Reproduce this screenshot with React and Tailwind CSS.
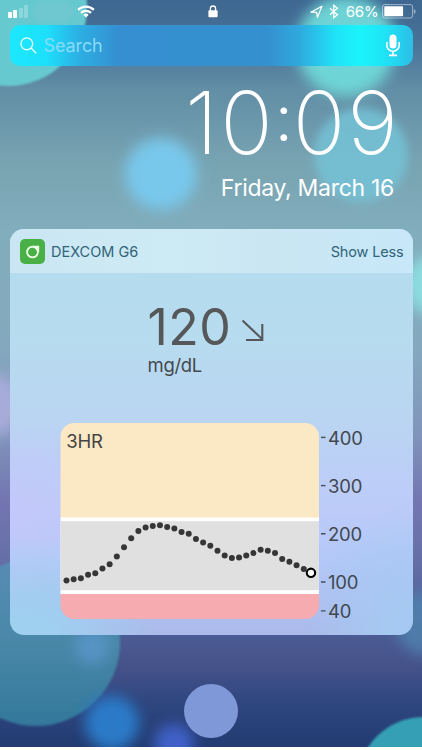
import { useId } from 'react';

// One reading every five minutes, oldest first (mg/dL)
const readings = [
    104, 107, 109, 116, 119, 129, 138, 154, 173, 192, 207, 214, 217, 219, 215, 212, 205, 201,
    190, 183, 176, 166, 156, 151, 152, 156, 161, 168, 166, 161, 149, 143, 136, 128, 120,
];

const ticks = [400, 300, 200, 100, 40];

const toX = (index) => 6.5 + index * 7.19;
const toY = (value) => 159.5 - (value - 100) * 0.482;

/**
 * Wallpaper - blurred bokeh circles over the gradient
 */
const Wallpaper = () => {
    const id = useId();
    const soft = `${id}-soft`;
    const blur = `${id}-blur`;
    const edge = `${id}-edge`;

    return (
        <svg className="absolute inset-0" width="422" height="747" viewBox="0 0 422 747">
            <defs>
                <filter id={edge}><feGaussianBlur stdDeviation="1" /></filter>
                <filter id={soft} x="-30%" y="-30%" width="160%" height="160%"><feGaussianBlur stdDeviation="4" /></filter>
                <filter id={blur} x="-50%" y="-50%" width="200%" height="200%"><feGaussianBlur stdDeviation="7" /></filter>
                <linearGradient id={`${id}-teal`} x1="0" y1="0" x2="0" y2="1">
                    <stop offset="0" stopColor="#578cb5" />
                    <stop offset="0.5" stopColor="#4a88a8" />
                    <stop offset="1" stopColor="#33789b" />
                </linearGradient>
            </defs>
            <circle cx="8" cy="7" r="79" fill="#66c9d0" filter={`url(#${edge})`} />
            <circle cx="346" cy="46" r="50" fill="#6fd9d8" opacity="0.95" filter={`url(#${blur})`} />
            <circle cx="361" cy="155" r="47" fill="#74c2d6" opacity="0.85" filter={`url(#${soft})`} />
            <circle cx="161" cy="174" r="36" fill="#78c8ec" filter={`url(#${blur})`} />
            <circle cx="434" cy="285" r="30" fill="#8bdcdf" filter={`url(#${blur})`} />
            <circle cx="-10" cy="405" r="32" fill="#a7abd9" filter={`url(#${blur})`} />
            <circle cx="36" cy="642" r="84" fill={`url(#${id}-teal)`} filter={`url(#${edge})`} />
            <circle cx="92" cy="647" r="17" fill="#5895c8" opacity="0.9" filter={`url(#${blur})`} />
            <circle cx="112" cy="723" r="27" fill="#297ac8" filter={`url(#${blur})`} />
            <circle cx="174" cy="744" r="20" fill="#4060c8" filter={`url(#${blur})`} />
            <circle cx="427" cy="623" r="32" fill="#4f80ac" opacity="0.9" filter={`url(#${blur})`} />
            <circle cx="424" cy="784" r="67" fill="#35a0b5" filter={`url(#${edge})`} />
        </svg>
    );
};

const StatusBar = () => (
    <div className="grid h-[25px] grid-cols-[1fr_auto_1fr] items-start pt-1 pl-[7.5px] pr-[6.5px]">
        <div className="flex items-start">
            <div className="flex h-[14px] items-end gap-[1.6px]">
                <span className="h-[6px] w-[4px] rounded-[1px] bg-white" />
                <span className="h-[8px] w-[4px] rounded-[1px] bg-white" />
                <span className="h-[10.5px] w-[4px] rounded-[1px] bg-white/25" />
                <span className="h-[13px] w-[4px] rounded-[1px] bg-white/25" />
            </div>
            <span className="ml-[5px] -mt-[2px] h-[20px] w-[41px] rounded-full bg-[#74c8cf]/70 blur-[2px]" />
            <svg className="ml-[3px] mt-[1px]" width="18" height="13" viewBox="0 0 19 13" fill="none" stroke="white" strokeWidth="2.4">
                <path d="M1.2 4.8a11.9 11.9 0 0 1 16.6 0" />
                <path d="M4.2 7.9a7.6 7.6 0 0 1 10.6 0" />
                <path d="M9.5 12.8 6.7 10a4.1 4.1 0 0 1 5.6 0z" fill="white" stroke="none" />
            </svg>
        </div>
        <svg className="mt-[1px] ml-[2px]" width="10" height="13" viewBox="0 0 10 13">
            <path d="M2.4 6V3.6a2.6 2.6 0 0 1 5.2 0V6" fill="none" stroke="white" strokeWidth="1.3" />
            <rect x="0.4" y="5.3" width="9.2" height="7" rx="1" fill="white" />
        </svg>
        <div className="flex items-start justify-end">
            <svg className="mt-px mr-[6px]" width="13" height="13" viewBox="0 0 13 13" fill="none" stroke="white" strokeWidth="1.2" strokeLinejoin="round">
                <path d="M12 1.2.9 7.2l5.7.2.8 4.9z" />
            </svg>
            <svg className="mr-[7px]" width="10" height="15" viewBox="0 0 10 15" fill="none" stroke="white" strokeWidth="1.3">
                <path d="M1 4.2 8.4 10.7 4.8 13.7V1.3L8.4 4.3 1 10.8" />
            </svg>
            <span className="mr-[3px] text-[15px] leading-[15px] tracking-[-0.2px]">66%</span>
            <svg width="34" height="15" viewBox="0 0 34 15">
                <rect x="0.6" y="0.6" width="30" height="13.4" rx="2.2" fill="none" stroke="white" strokeOpacity="0.5" />
                <rect x="2.3" y="2.3" width="18.8" height="10" rx="0.8" fill="white" />
                <path d="M31.9 5v4.8c1-.4 1.6-1.3 1.6-2.4S32.9 5.4 31.9 5z" fill="white" fillOpacity="0.5" />
            </svg>
        </div>
    </div>
);

const SearchBar = () => (
    <div className="mx-[9.5px] flex h-[41px] items-center rounded-[10px] bg-[linear-gradient(90deg,#1be8fd_0%,#1de0fb_9%,#2cb0e4_17%,#358fd0_27%,#3590d0_64%,#2faade_72%,#1fe4f8_81%,#1bf3fc_87%,#1fe3f5_93%,#2cbee6_100%)] pl-[10.5px] pr-[12px]">
        <svg width="17" height="17" viewBox="0 0 17 17" fill="none" stroke="white" strokeOpacity="0.9" strokeWidth="1.4">
            <circle cx="6.8" cy="6.8" r="5.9" />
            <path d="m11 11 5.2 5.2" />
        </svg>
        <span className="ml-[6.5px] flex-1 text-[18px] tracking-[-0.1px] text-[#86dcf8]">Search</span>
        <svg width="16" height="23" viewBox="0 0 16 23" fill="none" stroke="white" strokeWidth="1.6">
            <rect x="4.5" y="0.5" width="7" height="14" rx="3.5" fill="white" stroke="none" />
            <path d="M1.8 8v3.2a6.2 6 0 0 0 12.4 0V8M8 17.2v4M4 21.4h8" />
        </svg>
    </div>
);

const Clock = () => (
    <div className="flex h-[163px] flex-col items-end pr-[28px] text-white">
        <div className="mt-[17px] mr-[-6px] flex text-[87px] leading-[80px] font-extralight tracking-[2px]">
            <span>10</span>
            <span className="w-[18px] pr-[2px] pt-[4px] text-center text-[64px] leading-[62px] font-light tracking-normal">:</span>
            <span>09</span>
        </div>
        <div className="mt-[11px] text-[23px] leading-[28px] tracking-[-0.3px]">Friday, March 16</div>
    </div>
);

const TrendChart = () => {
    const clip = useId();
    const last = readings.length - 1;

    return (
        <svg className="ml-[50.5px] mt-[46px] overflow-visible" width="310" height="200" viewBox="0 0 310 200">
            <clipPath id={clip}>
                <rect x="0.5" y="0" width="258.5" height="196" rx="14" />
            </clipPath>
            <g clipPath={`url(#${clip})`}>
                <rect width="260" height="95" fill="#fbe9c6" />
                <rect y="94.5" width="260" height="77" fill="white" />
                <rect y="98.2" width="260" height="69" fill="#e0e0e0" />
                <rect y="171" width="260" height="26" fill="#f6abb1" />
            </g>
            <text x="6.3" y="24.5" fontSize="18.5" letterSpacing="-0.2" fill="#444444">3HR</text>
            {readings.slice(0, last).map((value, index) => (
                <circle key={index} cx={toX(index)} cy={toY(value)} r="3" fill="#363636" />
            ))}
            <circle cx={toX(last)} cy={toY(readings[last])} r="4.2" fill="white" stroke="black" strokeWidth="2.1" />
            {ticks.map((tick) => (
                <g key={tick}>
                    <path d={`M261 ${toY(tick) - 0.5}h4.5`} stroke="#444c58" strokeWidth="1.4" />
                    <text x="268" y={toY(tick) + 6.6} fontSize="18.5" letterSpacing="-0.2" fill="#414850">{tick}</text>
                </g>
            ))}
        </svg>
    );
};

const DexcomWidget = () => (
    <section className="mx-[9.5px] h-[406px] overflow-hidden rounded-[14px] bg-[radial-gradient(ellipse_130px_100px_at_4%_100%,#9fd0f0_20%,transparent),radial-gradient(ellipse_110px_130px_at_100%_100%,#a5c9f2_20%,transparent),radial-gradient(ellipse_120px_90px_at_0%_70%,#c3c8fa,transparent),linear-gradient(180deg,#b5dcee_12%,#b7dbef_28%,#bad4f2_48%,#bccef7_62%,#bccbf9_70%,#b3c8f8_82%,#abbaea_100%)]">
        <header className="flex h-[44px] items-center bg-[linear-gradient(90deg,#cbe6f3,#cdebf4_40%,#cae6f3_65%,#c7e8f9)] pl-[10.5px] pr-[9px] text-[#316379]">
            <svg width="25" height="25" viewBox="0 0 25 25">
                <rect width="25" height="25" rx="5" fill="#48b044" />
                <circle cx="12.5" cy="13" r="5.3" fill="none" stroke="#edffe9" strokeWidth="2" />
                <path d="M12.5 6.7h6.7V13h-1.5l-5.2-4.8z" fill="#edffe9" />
                <circle cx="12.5" cy="13" r="4.3" fill="#48b044" />
            </svg>
            <span className="mt-px ml-[6px] flex-1 text-[14.5px]">DEXCOM G6</span>
            <span className="mt-px text-[14.5px] tracking-[-0.15px]">Show Less</span>
        </header>
        <div className="flex h-[54px] items-start pt-[30px] pl-[138px] text-[#555759]">
            <span className="text-[50px] leading-[48px] tracking-[0.4px]">120</span>
            <svg className="ml-[9.5px] mt-[16px]" width="24" height="24" viewBox="0 0 24 24" fill="none" stroke="#55575b" strokeWidth="2.1">
                <path d="M1.5 1.5 21 20M21.3 5v16H5" />
            </svg>
        </div>
        <div className="mt-[26px] pl-[138px] text-[18.5px] leading-[24px] tracking-[-0.3px] text-[#44494e]">mg/dL</div>
        <TrendChart />
    </section>
);

export default function App() {
    return (
        <div className="h-[750px] w-[422px] bg-white font-['Inter','Liberation_Sans',sans-serif]">
            <main className="relative h-[747px] overflow-hidden bg-[linear-gradient(180deg,#3e6791_0%,#4a7398_6%,#628ea6_12%,#78a4b2_22%,#82adbc_31%,#84a9be_46%,#8095bb_58%,#7375b1_67%,#6870a9_74%,#4c5d95_84%,#46538a_89%,#2f4680_94%,#223b70_100%)] text-white">
                <Wallpaper />
                <div className="relative">
                    <StatusBar />
                    <SearchBar />
                    <Clock />
                    <DexcomWidget />
                    <div className="mx-auto mt-[49px] size-[54px] rounded-full bg-[#7f99d8]" />
                </div>
            </main>
        </div>
    );
}
